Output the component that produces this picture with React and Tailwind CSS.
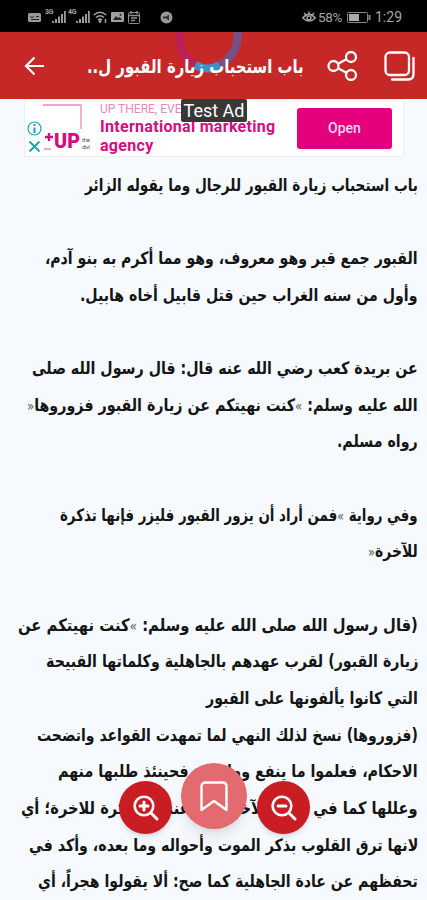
import { useLayoutEffect, useRef, useState } from "react";

const lines = [
  { text: "باب استحباب زيارة القبور للرجال وما يقوله الزائر", width: 333 },
  null,
  { text: "القبور جمع قبر وهو معروف، وهو مما أكرم به بنو آدم،", width: 373 },
  { text: "وأول من سنه الغراب حين قتل قابيل أخاه هابيل.", width: 338 },
  null,
  { text: "عن بريدة كعب رضي الله عنه قال: قال رسول الله صلى", width: 386 },
  { text: "الله عليه وسلم: »كنت نهيتكم عن زيارة القبور فزوروها«", width: 391 },
  { text: "رواه مسلم.", width: 81 },
  null,
  { text: "وفي رواية »فمن أراد أن يزور القبور فليزر فإنها تذكرة", width: 358 },
  { text: "للآخرة«", width: 50 },
  null,
  { text: "(قال رسول الله صلى الله عليه وسلم: »كنت نهيتكم عن", width: 400 },
  { text: "زيارة القبور) لقرب عهدهم بالجاهلية وكلماتها القبيحة", width: 372 },
  { text: "التي كانوا يألفونها على القبور", width: 212 },
  { text: "(فزوروها) نسخ لذلك النهي لما تمهدت القواعد واتضحت", width: 381 },
  { text: "الاحكام، فعلموا ما ينفع وما يضر فحينئذ طلبها منهم", width: 360 },
  { text: "وعللها كما في الخبر الآخر بأنها عندكم تذكرة للاخرة؛ أي", width: 397 },
  { text: "لانها ترق القلوب بذكر الموت وأحواله وما بعده، وأكد في", width: 389 },
  { text: "تحفظهم عن عادة الجاهلية كما صح: ألا يقولوا هجراً، أي", width: 380 },
];

// Squeezes a single line of text to a given width
function FitText({ text, width }) {
  const ref = useRef(null);
  const [scale, setScale] = useState(1);

  useLayoutEffect(() => {
    setScale(width / ref.current.offsetWidth);
  }, [text, width]);

  return (
    <span
      ref={ref}
      className="inline-block shrink-0 origin-right whitespace-nowrap"
      style={{ transform: `scaleX(${scale})` }}
    >
      {/* quote marks are lighter and smaller than the words */}
      {text.split(/([«»])/).map((part, idx) =>
        part === "«" || part === "»" ? (
          <span key={idx} className="text-[14px] font-normal text-[#555]">
            {part}
          </span>
        ) : (
          part
        )
      )}
    </span>
  );
}

function Signal() {
  return (
    <svg className="h-3 w-[14px]" viewBox="0 0 14 12" fill="#9a9a9a">
      <path d="M0 10h2v2H0zM3 8h2v4H3zM6 5.500h2V12H6zM9 3h2v9H9zM12 0h1.800v12H12z" />
    </svg>
  );
}

function StatusBar() {
  return (
    <div className="flex h-8 shrink-0 items-center bg-black pt-0.5 pr-[25px] pl-7 text-[#a5a5a5]">
      <svg className="h-[9px] w-[13px]" viewBox="0 0 13 9" fill="none">
        <rect width="13" height="9" rx="1.500" fill="#999" />
        <path d="M2 3l2 2 2-2M8 3.500h3M3 6.500h8" stroke="#222" />
      </svg>
      <span className="ml-1 self-start pt-[7px] text-[7px] leading-none font-bold tracking-tighter">3G</span>
      <span className="-ml-px">
        <Signal />
      </span>
      <span className="ml-[2px] self-start pt-[7px] text-[7px] leading-none font-bold tracking-tighter">4G</span>
      <Signal />
      <svg className="ml-[3px] h-3 w-[14px]" viewBox="0 0 14 12" fill="none" stroke="#a0a0a0" strokeWidth="1.500">
        <path d="M.7 4Q7-1.500 13.300 4M3 6.500q4-3.500 8 0M5 9q2-1.800 4 0" />
        <circle cx="7" cy="10.500" r=".7" />
        <path d="M12.500 8v4" />
      </svg>
      <svg className="ml-[4px] h-[10px] w-[13px]" viewBox="0 0 13 10">
        <rect width="13" height="10" rx="1" fill="#a0a0a0" />
        <path d="M2 8l3-4 2 2 2-1 2 3z" fill="#222" />
        <circle cx="9.500" cy="2.700" r="1" fill="#222" />
      </svg>
      <svg className="ml-1 h-[13px] w-3" viewBox="0 0 12 13" fill="none" stroke="#909090">
        <rect x=".5" y="1.500" width="11" height="11" rx="1" />
        <path d="M1 4.500h10M3 0v3M9 0v3M3 7h6M3 9.500h4" strokeWidth="1.400" />
      </svg>
      <svg className="ml-5 size-[13px]" viewBox="0 0 13 13">
        <circle cx="6.500" cy="6.500" r="6" fill="#999" />
        <path d="M3 5.500h3l3-2v6l-3-2H3z" fill="#333" />
      </svg>
      <div className="ml-auto flex items-center">
        <svg className="h-3 w-[14px]" viewBox="0 0 14 12" fill="none" stroke="#a5a5a5" strokeWidth="1.400">
          <path d="M.7 7Q7-.5 13.300 7 7 13 .7 7zM2 2l2 2M7 .5V3M12 2l-2 2" />
          <circle cx="7" cy="7" r="2" />
        </svg>
        <span className="ml-0.5 w-[25px] text-[13.500px] tracking-tight">58%</span>
        <svg className="ml-[4px] h-[11px] w-6" viewBox="0 0 24 11" fill="none" stroke="#888">
          <rect x=".5" y=".5" width="20" height="10" rx="1" />
          <rect x="2" y="2" width="10" height="7" fill="#aaa" stroke="none" />
          <path d="M22.500 3v5" strokeWidth="2" />
        </svg>
        <span className="ml-1 text-[14px]">1:29</span>
      </div>
    </div>
  );
}

function Header() {
  return (
    <header className="relative flex h-[67px] shrink-0 items-center overflow-hidden bg-[#c62828] text-white">
      <svg className="ml-[24px] h-5 w-5" viewBox="0 0 20 20" fill="none" stroke="currentColor" strokeWidth="2.200">
        <path d="M20 10H2M10.500 1.500L2 10l8.500 8.500" />
      </svg>
      <svg className="absolute top-0 left-[173px] h-[42px] w-[70px]" viewBox="0 0 70 42" fill="none" strokeWidth="8">
        <path d="M6 0Q6 24 22 33" stroke="#bd1f5b" />
        <path d="M22 33Q34 40 47 33" stroke="#3e91c5" />
        <path d="M47 33Q65 23 65 0" stroke="#745186" />
      </svg>
      <h1 dir="rtl" className="relative mt-px ml-auto flex w-[217px] font-['DejaVu_Sans',sans-serif] text-[19px] font-bold">
        <FitText text="باب استحباب زيارة القبور ل.." width={217} />
      </h1>
      <svg className="ml-[23px] h-[30px] w-[31px]" viewBox="0 0 31 30" fill="none" stroke="currentColor" strokeWidth="2.300">
        <circle cx="6.500" cy="15" r="5" />
        <circle cx="24" cy="6" r="5" />
        <circle cx="24" cy="24" r="5" />
        <path d="M11 12.700l8.500-4.400M11 17.300l8.500 4.400" />
      </svg>
      <svg className="mr-[12px] ml-[26px] h-[30px] w-[31px]" viewBox="0 0 31 30" fill="none" stroke="currentColor" strokeWidth="2.300" strokeLinecap="round">
        <rect x="1.500" y="1.500" width="23.500" height="22.500" rx="4.500" />
        <path d="M29.500 7v16q0 5.500-5.500 5.500H8" />
      </svg>
    </header>
  );
}

function AdBanner() {
  return (
    <div className="relative ml-6 flex h-[58px] w-[380px] shrink-0 border border-[#edf0f2] bg-white text-[#d80b82]">
      <div className="flex w-[74px] items-end">
        <div className="mb-[2px] ml-[2px] flex flex-col gap-[3px] text-[#16a5bb]">
          <svg className="size-[15px]" viewBox="0 0 15 15" fill="none" stroke="currentColor" strokeWidth="1.200">
            <circle cx="7.500" cy="7.500" r="6.500" />
            <path d="M7.500 6.500V12M7.500 3v2" strokeWidth="2" />
          </svg>
          <svg className="size-[15px]" viewBox="0 0 15 15" stroke="currentColor" strokeWidth="1.800">
            <path d="M2.500 2.500l10 10M12.500 2.500l-10 10" />
          </svg>
        </div>
        <svg className="h-[56px] w-[52px] shrink-0" viewBox="0 0 52 56" fill="none" stroke="#e68abd" strokeWidth="1.300">
          <path d="M1 5h38v24M2 49h7" />
          <path d="M3 37h8M7 33v8" stroke="#d80b82" strokeWidth="2.300" />
          <text x="12" y="48" fill="#d80b82" stroke="none" fontSize="20" fontWeight="900" textLength="26" lengthAdjust="spacingAndGlyphs">UP</text>
          <text x="40" y="42" fill="#555" stroke="none" fontSize="6" textLength="8">the</text>
          <text x="40" y="49" fill="#555" stroke="none" fontSize="6" textLength="8">divi</text>
        </svg>
      </div>
      <div className="w-[190px] pt-[2px] pl-px">
        <div className="text-[12px] leading-[15px] whitespace-nowrap text-[#de8bbb]">UP THERE, EVE</div>
        <div className="text-[16px] leading-[19px] font-bold tracking-[0.3px] whitespace-nowrap">
          International marketing
          <br />
          agency
        </div>
      </div>
      <button className="mt-2 ml-2 h-[41px] w-[95px] rounded-[3px] bg-[#e4007d] text-[14px] font-medium text-[#ffd9ed]">
        Open
      </button>
      <div className="absolute -top-px left-[156px] flex h-[23px] w-[66px] items-center justify-center rounded-[2px] bg-[#383838] text-[18px] whitespace-nowrap text-white">
        Test Ad
      </div>
    </div>
  );
}

function ZoomButton({ plus }) {
  return (
    <button className="mt-[18px] flex size-[53px] items-center justify-center rounded-full bg-[#c81d22] shadow-md">
      <svg className="size-[26px]" viewBox="0 0 26 26" fill="none" stroke="currentColor" strokeWidth="2.600" strokeLinecap="round">
        <circle cx="11" cy="11" r="9.300" />
        <path d="M18 18l6 6" strokeWidth="3" />
        <path d={plus ? "M7 11h8M11 7v8" : "M7 11h8"} strokeWidth="3" />
      </svg>
    </button>
  );
}

export default function App() {
  return (
    <div className="relative flex h-[900px] w-[427px] flex-col overflow-hidden bg-[#f6faff] font-['Roboto',sans-serif]">
      <StatusBar />
      <Header />
      <AdBanner />
      <main dir="rtl" className="mt-[10px] pr-[9px] font-['DejaVu_Sans',sans-serif] text-[17px] font-bold text-[#151515]">
        {lines.map((line, idx) => (
          <p key={idx} className="flex h-[36.680px] items-center">
            {line && <FitText text={line.text} width={line.width} />}
          </p>
        ))}
      </main>

      {/* Floating actions */}
      <div className="absolute top-[763px] left-[119px] flex items-start text-white">
        <ZoomButton plus />
        <button className="ml-[9px] flex size-[66px] items-center justify-center rounded-full bg-[#e36a6e] shadow-lg">
          <svg className="h-[31px] w-[28px]" viewBox="0 0 28 31" fill="none" stroke="currentColor" strokeWidth="2.400" strokeLinejoin="round">
            <path d="M1.500 29V5.500q0-4 4-4h17q4 0 4 4V29L14 20z" />
          </svg>
        </button>
        <div className="ml-[10px]">
          <ZoomButton />
        </div>
      </div>
    </div>
  );
}
